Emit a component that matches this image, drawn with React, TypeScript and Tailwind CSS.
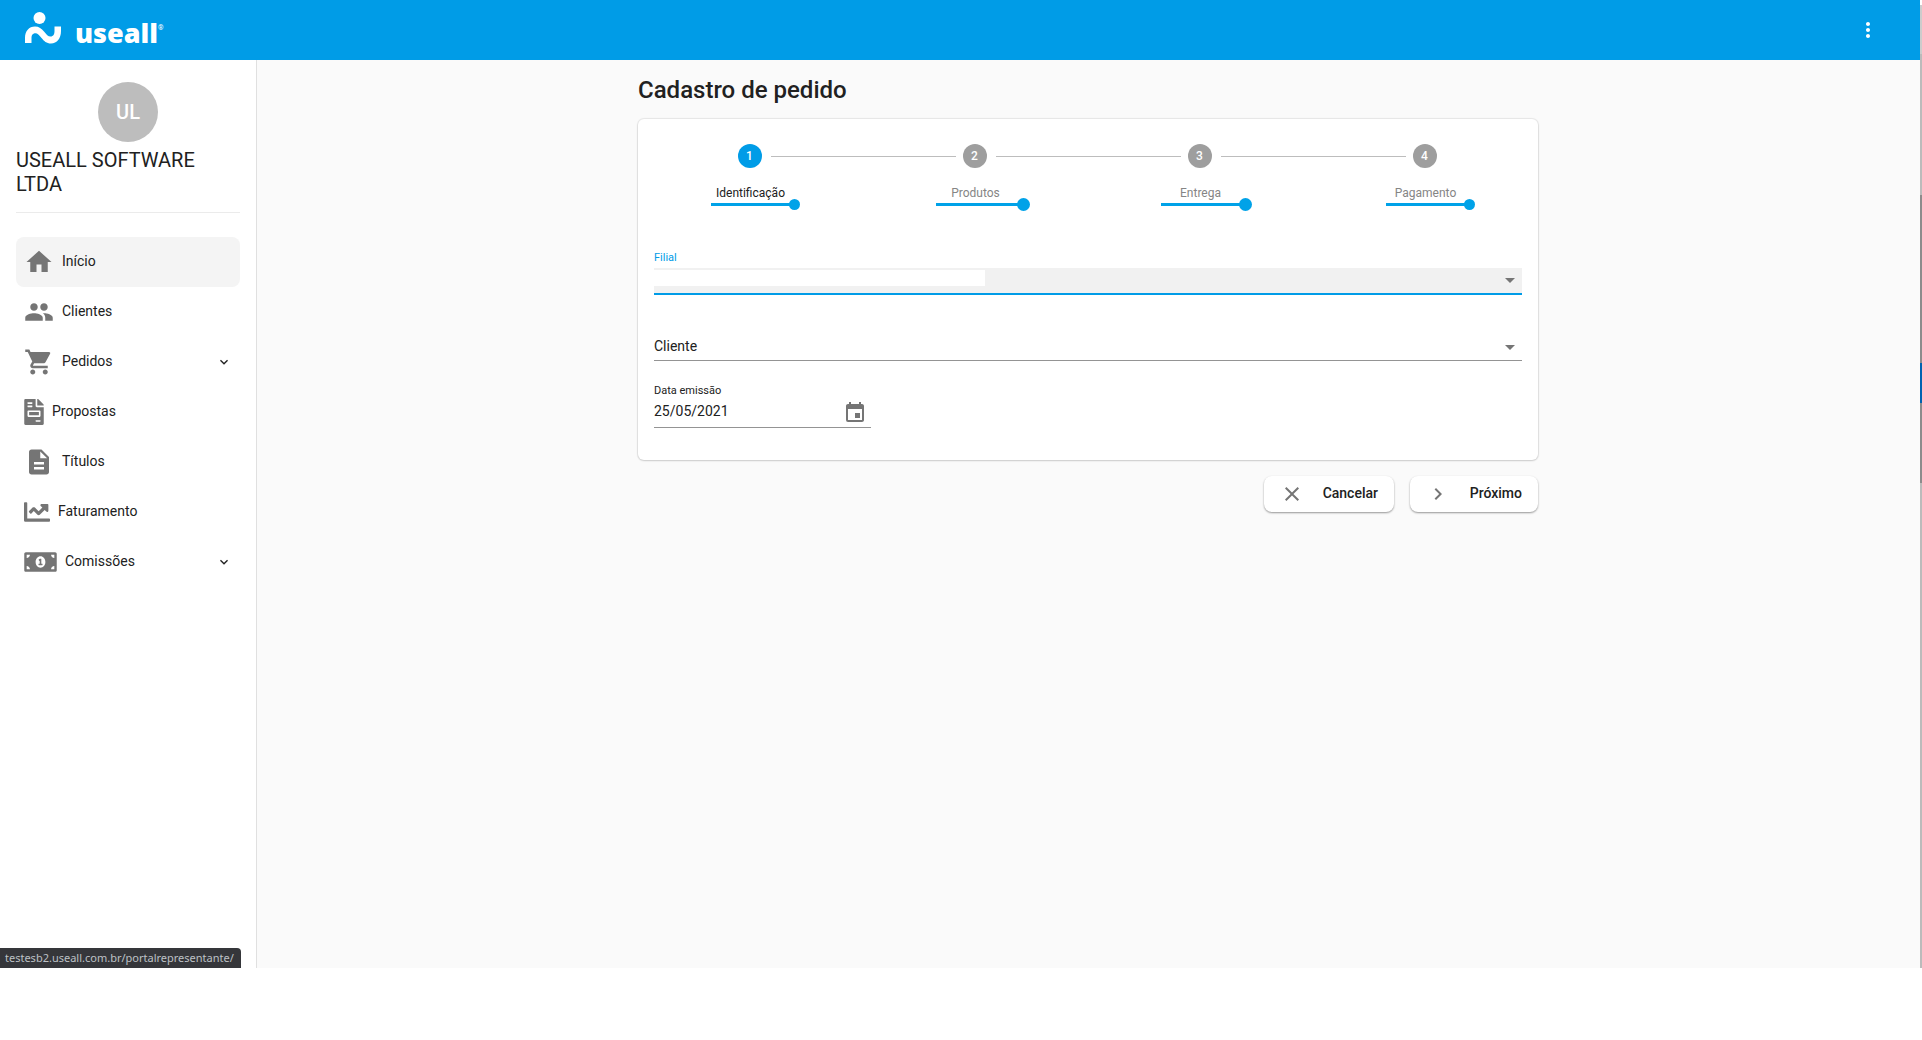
import type { ComponentType, ReactNode } from "react";
import { FaChartLine, FaFileInvoice, FaMoneyBillAlt } from "react-icons/fa";
import {
  MdArrowDropDown,
  MdChevronRight,
  MdClose,
  MdDescription,
  MdEvent,
  MdExpandMore,
  MdHome,
  MdMoreVert,
  MdPeople,
  MdShoppingCart,
} from "react-icons/md";

interface MenuItem {
  label: string;
  icon: ComponentType<{ className?: string }>;
  iconClass: string;
  active?: boolean;
  expandable?: boolean;
}

const menu: MenuItem[] = [
  { label: "Início", icon: MdHome, iconClass: "size-[30px]", active: true },
  { label: "Clientes", icon: MdPeople, iconClass: "size-[30px]" },
  { label: "Pedidos", icon: MdShoppingCart, iconClass: "size-[30px]", expandable: true },
  { label: "Propostas", icon: FaFileInvoice, iconClass: "h-[26px] w-5" },
  { label: "Títulos", icon: MdDescription, iconClass: "size-[30px]" },
  { label: "Faturamento", icon: FaChartLine, iconClass: "size-[26px]" },
  { label: "Comissões", icon: FaMoneyBillAlt, iconClass: "h-[26px] w-[33px]", expandable: true },
];

const steps = [
  { label: "Identificação", marker: "w-[89px]", dot: "size-[11px]" },
  { label: "Produtos", marker: "w-[94px]", dot: "size-[13px]" },
  { label: "Entrega", marker: "w-[91px]", dot: "size-[13px]" },
  { label: "Pagamento", marker: "w-[89px]", dot: "size-[11px]" },
];

function Logo() {
  return (
    <a href="#" aria-label="useall" className="flex items-center pb-1 text-white">
      <svg viewBox="0 0 36 32" className="h-8 w-9" fill="currentColor">
        <circle cx="14.5" cy="6" r="6" />
        <path d="M0 31V26C0 19 4 14.5 10 14.5C14 14.5 16.500 16.500 19 19.500C21.500 22.500 23 24.500 25.500 24.500C28.500 24.500 29.500 22 29.500 19V14.500H36V19C36 26.500 32 31.500 26 31.500C21.500 31.500 19 29 16.500 26C14 23 12.500 21.300 10.500 21.300C7.500 21.300 6.500 23.500 6.500 26V31Z" />
      </svg>
      <span className="ml-[14px] pt-[9px] font-['Open_Sans',sans-serif] text-[27px] leading-8 font-extrabold">useall</span>
      <span className="text-[7px]">®</span>
    </a>
  );
}

function Header() {
  return (
    <header className="flex h-[60px] shrink-0 items-center justify-between bg-[#009ce7] pr-10 pl-[25px]">
      <Logo />
      <button type="button" aria-label="Mais opções" className="text-white">
        <MdMoreVert className="size-6" />
      </button>
    </header>
  );
}

function Sidebar() {
  return (
    <aside className="flex w-[257px] shrink-0 flex-col border-r border-[#e0e0e0] bg-white px-4 pt-[22px]">
      <div className="flex size-[60px] items-center justify-center self-center rounded-full bg-[#bdbdbd] text-xl font-medium text-white">
        UL
      </div>
      <h2 className="mt-1.5 border-b border-[#ebebeb] pb-4 text-xl leading-6">USEALL SOFTWARE LTDA</h2>
      <nav className="mt-6">
        {menu.map(({ label, icon: Icon, iconClass, active, expandable }) => (
          <a
            key={label}
            href="#"
            className={`flex h-[50px] items-center rounded-lg px-2 text-sm ${active ? "bg-[#f4f4f4]" : ""}`}
          >
            <Icon className={`shrink-0 text-[#757575] ${iconClass}`} />
            <span className="ml-2 flex-1 pb-0.5">{label}</span>
            {expandable && <MdExpandMore className="size-4" />}
          </a>
        ))}
      </nav>
    </aside>
  );
}

function Stepper() {
  return (
    <ol className="grid grid-cols-4 pt-[25px]">
      {steps.map((step, i) => (
        <li key={step.label}>
          <div className="flex items-center">
            <span className={`mr-[7px] h-px flex-1 ${i > 0 ? "bg-[#bdbdbd]" : ""}`} />
            <span
              className={`flex size-6 items-center justify-center rounded-full text-xs font-medium text-white ${
                i === 0 ? "bg-[#009ce7]" : "bg-[#9e9e9e]"
              }`}
            >
              {i + 1}
            </span>
            <span className={`ml-[9px] h-px flex-1 ${i < steps.length - 1 ? "bg-[#bdbdbd]" : ""}`} />
          </div>
          <p className={`mt-[18px] text-center text-xs leading-[14px] ${i === 0 ? "" : "text-[#858585]"}`}>
            {step.label}
          </p>
          <div className={`ml-[73px] flex h-[9px] items-center ${step.marker}`}>
            <span className="-mr-1 h-[3px] flex-1 bg-[#00a2e8]" />
            <span className={`shrink-0 rounded-full bg-[#00a2e8] ${step.dot}`} />
          </div>
        </li>
      ))}
    </ol>
  );
}

function SelectArrow() {
  return <MdArrowDropDown className="pointer-events-none absolute top-0 right-0 size-6 text-[#757575]" />;
}

function OrderForm() {
  return (
    <div className="px-4 pt-[41px] pb-8">
      <label htmlFor="filial" className="block text-[11px] leading-4 text-[#009ce7]">
        Filial
      </label>
      <div className="relative mt-0.5">
        <select
          id="filial"
          className="block h-[27px] w-full appearance-none border-b-2 border-[#009ce7] bg-[#f1f1f1] outline-none"
        >
          <option value=""></option>
        </select>
        <span className="pointer-events-none absolute top-0.5 left-0 h-4 w-[331px] bg-white" />
        <SelectArrow />
      </div>

      <div className="relative mt-10">
        <select
          aria-label="Cliente"
          className="block h-[26px] w-full appearance-none border-b border-[#949494] pb-1 text-sm outline-none"
        >
          <option>Cliente</option>
        </select>
        <SelectArrow />
      </div>

      <div className="mt-[22px] w-1/4">
        <label htmlFor="emissao" className="block text-[11px] leading-4">
          Data emissão
        </label>
        <div className="flex h-[29px] items-center border-b border-[#949494]">
          <input id="emissao" type="text" defaultValue="25/05/2021" className="min-w-0 flex-1 pb-1 text-sm outline-none" />
          <button type="button" aria-label="Abrir calendário" className="mr-1 text-[#757575]">
            <MdEvent className="size-6" />
          </button>
        </div>
      </div>
    </div>
  );
}

function ActionButton({ icon, children }: { icon: ReactNode; children: ReactNode }) {
  return (
    <button
      type="button"
      className="flex h-9 min-w-32 items-center justify-between gap-[19px] rounded-lg bg-white px-4 text-sm font-medium shadow-[0_1px_2px_rgba(0,0,0,0.4)]"
    >
      <span className="text-[#757575]">{icon}</span>
      <span className="pb-0.5">{children}</span>
    </button>
  );
}

// Slice of the neighbouring window that shows along the right edge
function EdgeStrip() {
  return (
    <div className="flex w-0.5 shrink-0 flex-col bg-[#bbbbbb]">
      <span className="h-[5px] bg-white" />
      <span className="h-[49px] bg-[#cccccc]" />
      <span className="h-[141px]" />
      <span className="h-[168px] bg-[#8c8c8c]" />
      <span className="h-10 bg-[#0063b1]" />
      <span className="h-20 bg-[#8c8c8c]" />
    </div>
  );
}

export default function App() {
  return (
    <div className="flex h-screen bg-white pb-[72px] font-[Roboto,sans-serif] text-[#212121]">
      <div className="relative flex min-w-0 flex-1 flex-col">
        <Header />
        <div className="flex min-h-0 flex-1">
          <Sidebar />
          <main className="flex-1 bg-[#fafafa] pr-px">
            <div className="mx-auto max-w-[900px] pt-3">
              <h1 className="text-2xl leading-9 font-medium">Cadastro de pedido</h1>
              <section className="mt-[11px] rounded-md bg-white shadow-[0_0_1px_1px_rgba(0,0,0,0.08),0_1px_2px_rgba(0,0,0,0.12)]">
                <Stepper />
                <OrderForm />
              </section>
              <div className="mt-4 flex justify-end gap-4">
                <ActionButton icon={<MdClose className="size-6" />}>Cancelar</ActionButton>
                <ActionButton icon={<MdChevronRight className="size-6" />}>Próximo</ActionButton>
              </div>
            </div>
          </main>
        </div>
        <div className="absolute bottom-0 left-0 flex h-5 items-center rounded-tr bg-[#35363a] px-[5px] pr-[7px] font-['Noto_Sans',sans-serif] text-[11px] text-[#bdc1c6]">
          testesb2.useall.com.br/portalrepresentante/
        </div>
      </div>
      <EdgeStrip />
    </div>
  );
}
